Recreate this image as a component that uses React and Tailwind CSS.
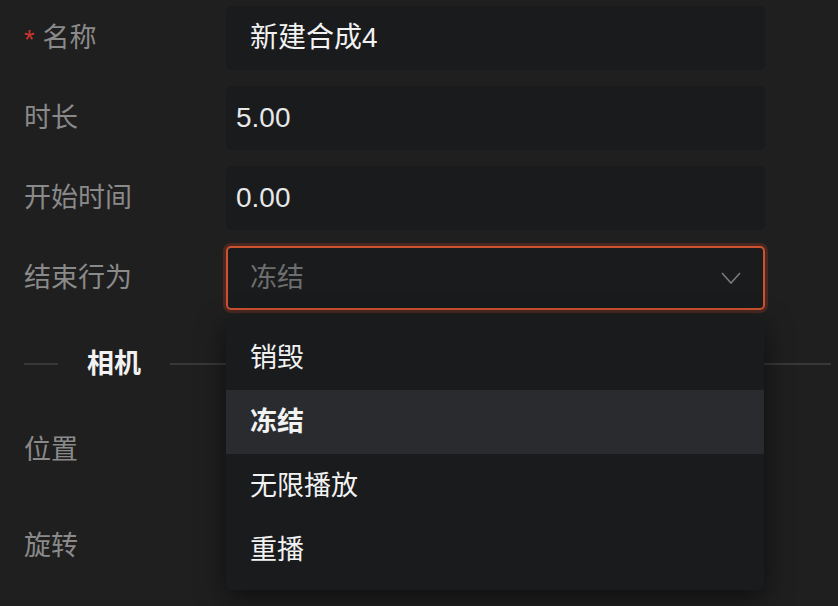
const font = { fontFamily: '"Liberation Sans", "Noto Sans CJK SC", sans-serif' }

const options = ['销毁', '冻结', '无限播放', '重播']

function Row({ label, required, children }) {
  return (
    <div className="flex items-center h-[64px]">
      <div className="w-[202px] shrink-0 flex items-center text-[27px] text-[#8a8a8a]">
        {required && <span className="text-[#c8362e] mr-[8px] mt-[4px]">*</span>}
        {label}
      </div>
      {children}
    </div>
  )
}

function Chevron() {
  return (
    <svg width="20" height="12" viewBox="0 0 20 12" fill="none">
      <polyline points="1,1 10,11 19,1" stroke="#7a7a7a" strokeWidth="1.6" />
    </svg>
  )
}

export default function App() {
  return (
    <div style={font} className="w-[838px] h-[606px] overflow-hidden bg-[#1f1f1f] pl-[24px] pr-[7px] pt-[6px]">
      <div className="flex flex-col gap-[16px]">
        <Row label="名称" required>
          <div className="w-[539px] h-[64px] rounded-[5px] bg-[#1a1b1d] flex items-center px-[24px] text-[28px] text-[#f2f2f2]">
            新建合成4
          </div>
        </Row>
        <Row label="时长">
          <div className="w-[539px] h-[64px] rounded-[5px] bg-[#1a1b1d] flex items-center px-[10px] text-[28px] text-[#e8e8e8]">
            5.00
          </div>
        </Row>
        <Row label="开始时间">
          <div className="w-[539px] h-[64px] rounded-[5px] bg-[#1a1b1d] flex items-center px-[10px] text-[28px] text-[#e8e8e8]">
            0.00
          </div>
        </Row>
        <Row label="结束行为">
          <div className="relative w-[539px] h-[64px]">
            <div className="w-full h-full rounded-[5px] bg-[#1a1b1d] border-2 border-[#cd5230] ring-[3px] ring-[#4a2822] flex items-center justify-between pl-[22px] pr-[22px] text-[27px] text-[#6e6e6e]">
              冻结
              <Chevron />
            </div>
            <div className="absolute left-0 top-[72px] w-[538px] z-10 bg-[#1a1b1d] rounded-[5px] py-[8px] shadow-[0_8px_28px_rgba(0,0,0,0.55)]">
              {options.map(o => (
                <div
                  key={o}
                  className={`h-[64px] flex items-center px-[24px] text-[27px] text-[#f2f2f2] ${o === '冻结' ? 'bg-[#2a2b2e] font-bold' : ''}`}
                >
                  {o}
                </div>
              ))}
            </div>
          </div>
        </Row>
      </div>

      <div className="flex items-center h-[40px] mt-[34px]">
        <div className="w-[34px] h-[2px] bg-[#383838]" />
        <span className="mx-[29px] text-[27px] font-bold text-[#f2f2f2]">相机</span>
        <div className="flex-1 h-[2px] bg-[#383838]" />
      </div>

      <div className="flex flex-col gap-[32px] mt-[34px]">
        <Row label="位置" />
        <Row label="旋转" />
      </div>
    </div>
  )
}
